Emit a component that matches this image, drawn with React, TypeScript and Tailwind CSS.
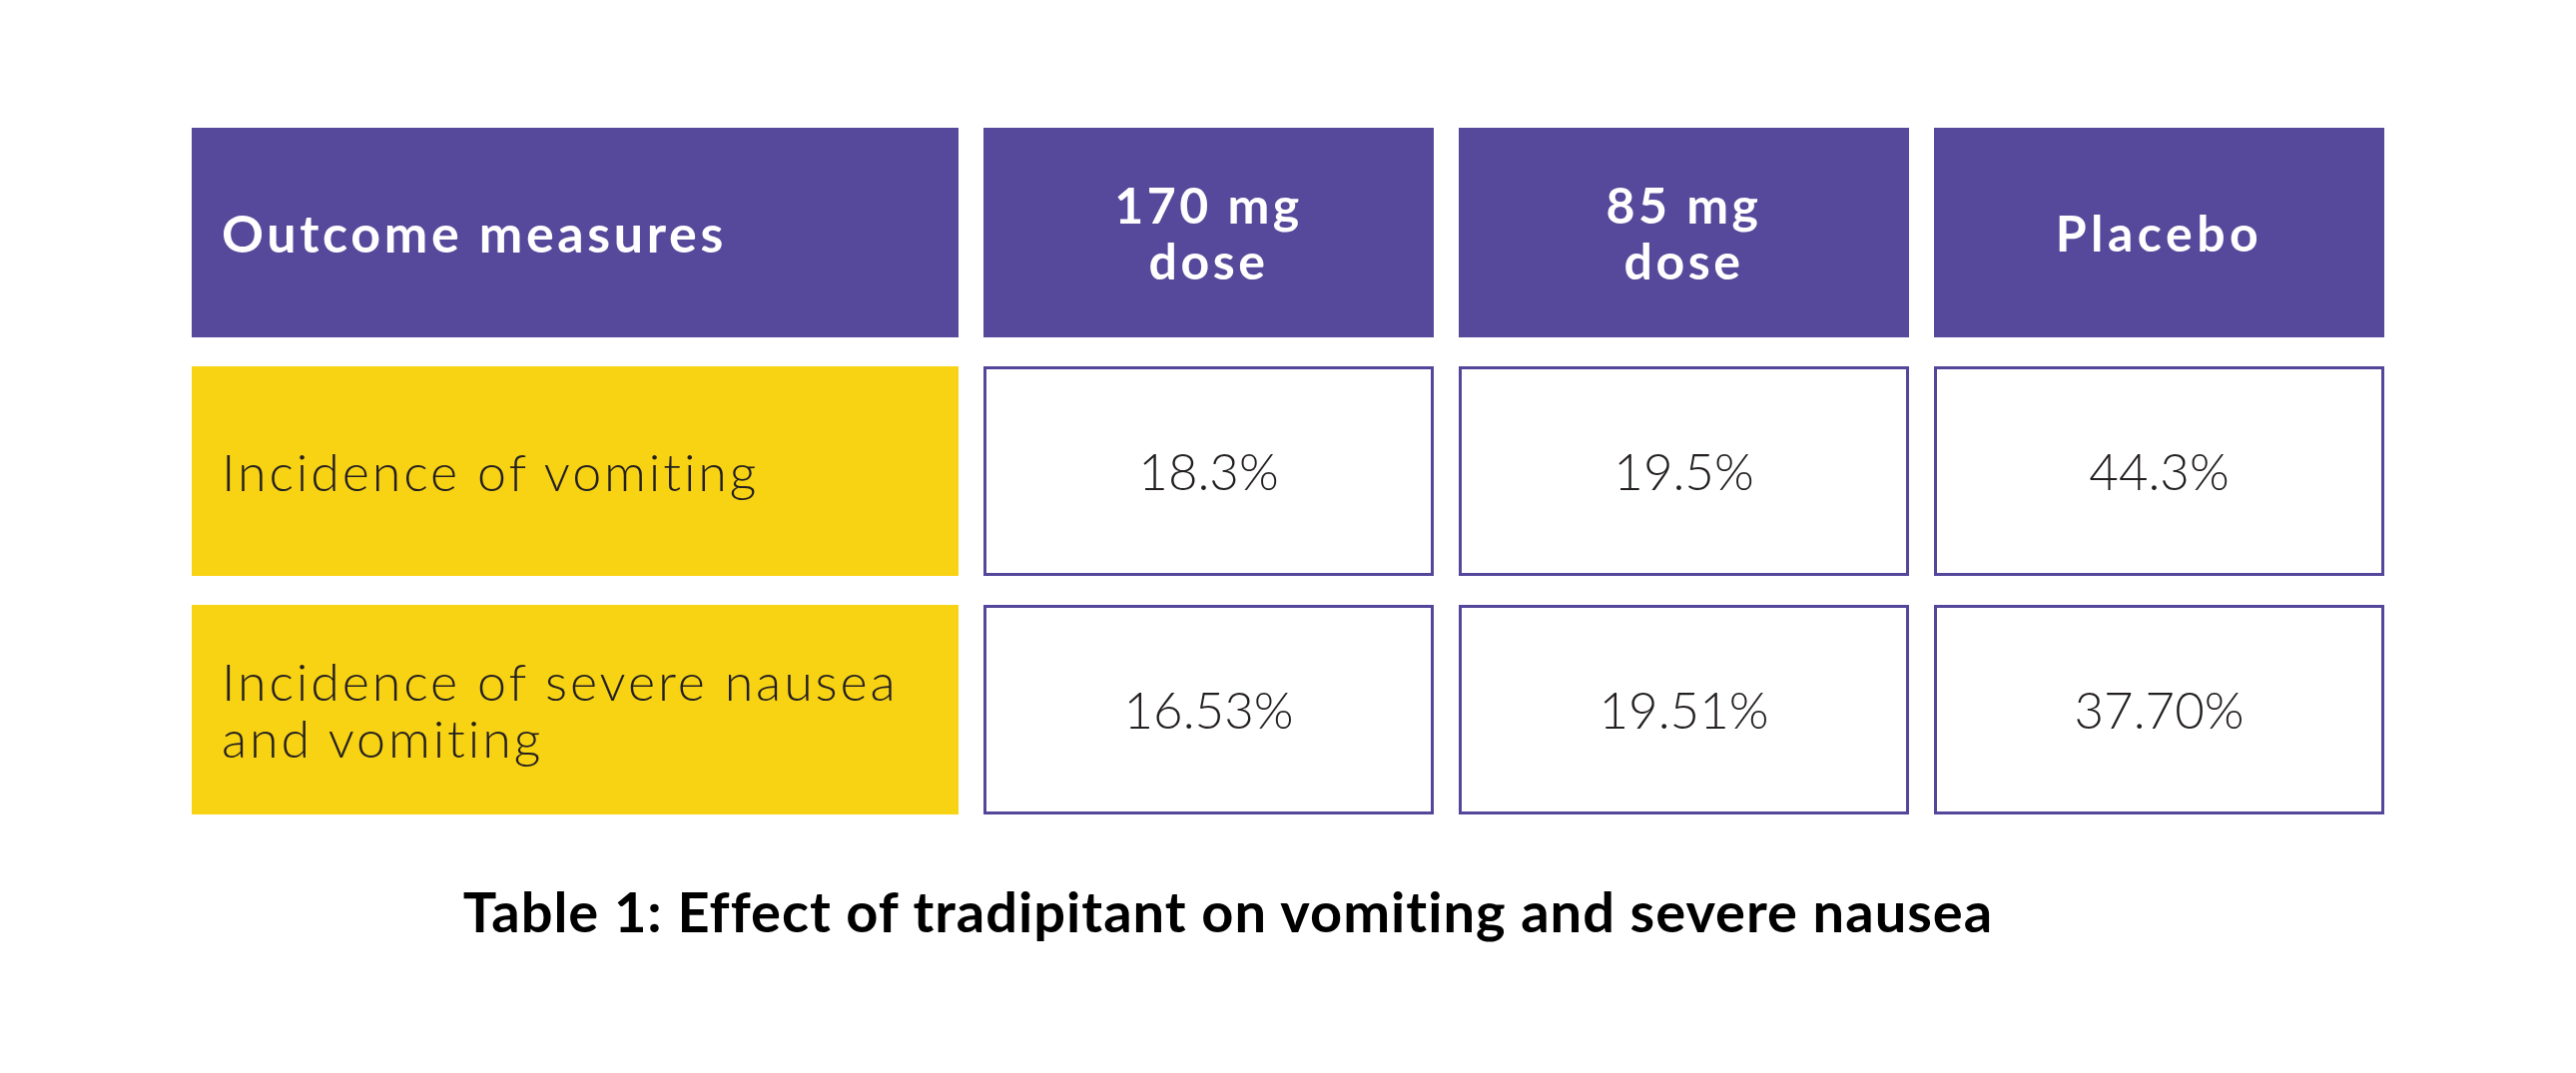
import React from "react";

export default function App() {
  const rows = [
    { label: ["Incidence of vomiting"], vals: ["18.3%", "19.5%", "44.3%"] },
    { label: ["Incidence of severe nausea", "and vomiting"], vals: ["16.53%", "19.51%", "37.70%"] },
  ];
  return (
    <div className="w-[2580px] h-[1075px] bg-white overflow-hidden font-['Lato','Open_Sans',sans-serif]">
      <div className="pt-[128px] pl-[192px]">
        <div className="grid grid-cols-[768px_451px_451px_451px] gap-x-[25px] gap-y-[29px]">
          <div className="h-[210px] bg-[#56489a] flex items-center pl-[30px] text-white font-bold text-[52px] leading-[56px] tracking-[0.07em]">
            Outcome measures
          </div>
          <div className="h-[210px] bg-[#56489a] flex items-center justify-center text-center text-white font-bold text-[50px] leading-[56px] tracking-[0.07em]">
            170 mg<br />dose
          </div>
          <div className="h-[210px] bg-[#56489a] flex items-center justify-center text-center text-white font-bold text-[50px] leading-[56px] tracking-[0.07em]">
            85 mg<br />dose
          </div>
          <div className="h-[210px] bg-[#56489a] flex items-center justify-center text-center text-white font-bold text-[50px] leading-[56px] tracking-[0.09em]">
            Placebo
          </div>
          {rows.map((r, i) => (
            <React.Fragment key={i}>
              <div className="h-[210px] bg-[#f8d313] flex flex-col justify-center pl-[30px] text-[#231f20] font-light text-[52px] leading-[57px] tracking-[0.055em]">
                {r.label.map((l, j) => (
                  <div key={j}>{l}</div>
                ))}
              </div>
              {r.vals.map((v, k) => (
                <div
                  key={k}
                  className="h-[210px] border-[3px] border-[#54469a] bg-white flex items-center justify-center text-[#231f20] font-light text-[51px]"
                >
                  {v}
                </div>
              ))}
            </React.Fragment>
          ))}
        </div>
      </div>
      <div className="pt-[65px] pr-[120px] flex justify-center">
        <div className="text-black font-bold text-[56px] leading-[64px] tracking-[0.018em]">
          Table 1: Effect of tradipitant on vomiting and severe nausea
        </div>
      </div>
    </div>
  );
}
